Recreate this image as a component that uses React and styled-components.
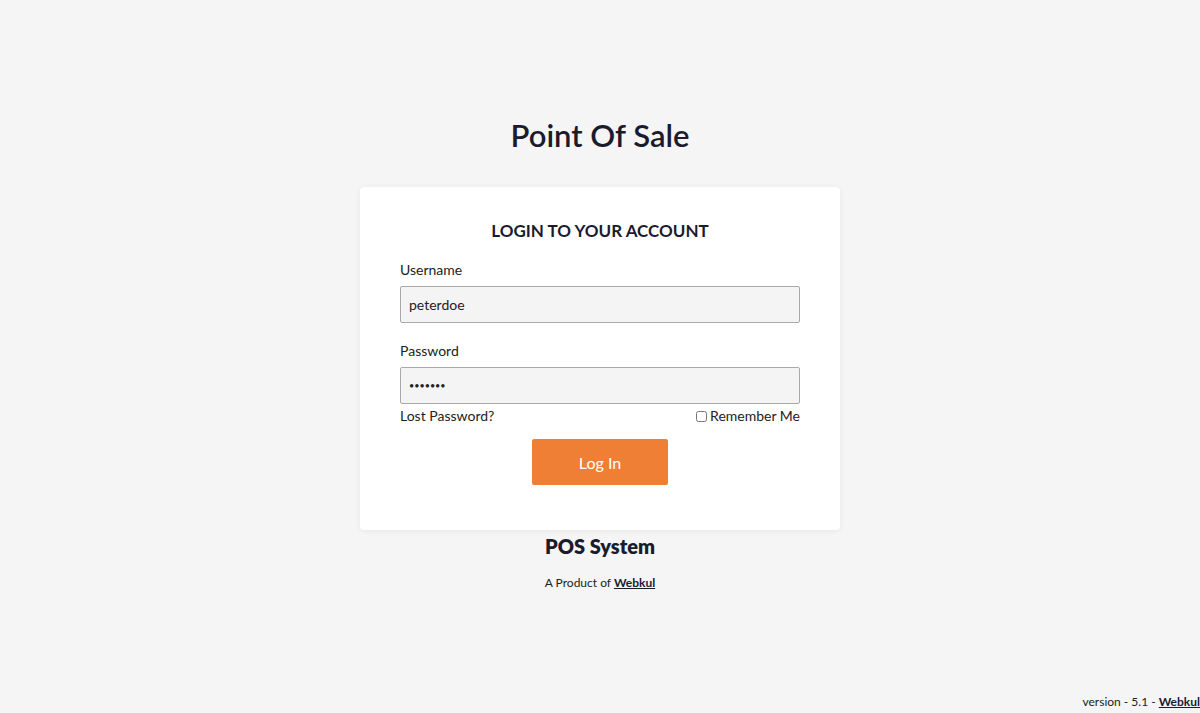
import styled, { createGlobalStyle } from "styled-components";

const GlobalStyle = createGlobalStyle`
  html, body {
    margin: 0;
    padding: 0;
    background: #f5f5f5;
    font-family: "Lato", "Noto Sans", sans-serif;
    color: #1c1c2b;
  }
  * { box-sizing: border-box; }
`

const Page = styled.div`
  min-height: 713px;
  display: flex;
  flex-direction: column;
  align-items: center;
  padding-top: 112px;
`

const Title = styled.h1`
  margin: 0 0 29px;
  font-size: 31px;
  line-height: 46px;
  font-weight: 600;
  color: #1b1b2e;
`

const Card = styled.form`
  width: 480px;
  background: #fff;
  border-radius: 4px;
  box-shadow: 0 1px 6px rgba(0, 0, 0, 0.06);
  padding: 32px 40px 45px;
  display: flex;
  flex-direction: column;
`

const Heading = styled.h2`
  margin: 0 0 17px;
  text-align: center;
  font-size: 17px;
  line-height: 24px;
  font-weight: 700;
  color: #1b1b2e;
`

const Label = styled.label`
  display: block;
  font-size: 14px;
  line-height: 20px;
  margin-top: ${p => p.$gap || 0}px;
  color: #222;
`

const Input = styled.input`
  display: block;
  width: 100%;
  height: 37px;
  margin-top: 6px;
  padding: 0 8px;
  background: #f4f4f4;
  border: 1px solid #a9a9a9;
  border-radius: 2px;
  font-family: inherit;
  font-size: ${p => (p.type === "password" ? 9 : 14)}px;
  color: #222;
  outline: none;
`

const Row = styled.div`
  display: flex;
  justify-content: space-between;
  align-items: center;
  margin-top: 2px;
  font-size: 14px;
  line-height: 20px;
  color: #222;
`

const Remember = styled.label`
  display: flex;
  align-items: center;
  gap: 3px;

  input {
    margin: 0;
    width: 11px;
    height: 11px;
  }
`

const Button = styled.button`
  align-self: center;
  margin-top: 13px;
  width: 136px;
  height: 46px;
  border: none;
  border-radius: 2px;
  background: #ee7f35;
  color: #fff;
  font-family: inherit;
  font-size: 16px;
  cursor: pointer;
`

const Brand = styled.div`
  margin-top: 4px;
  font-size: 20px;
  line-height: 24px;
  font-weight: 800;
  color: #1b1b2e;
`

const Product = styled.div`
  margin-top: 16px;
  font-size: 12px;
  line-height: 18px;
  color: #222;
`

const Link = styled.a`
  color: #1b1b2e;
  font-weight: 700;
  text-decoration: underline;
`

const Version = styled.div`
  margin-top: auto;
  align-self: flex-end;
  padding-bottom: 2px;
  font-size: 12px;
  line-height: 18px;
  color: #222;
  white-space: nowrap;
`

export default function App() {
  return (
    <>
      <GlobalStyle />
      <Page>
        <Title>Point Of Sale</Title>
        <Card onSubmit={e => e.preventDefault()}>
          <Heading>LOGIN TO YOUR ACCOUNT</Heading>
          <Label>Username</Label>
          <Input type="text" defaultValue="peterdoe" />
          <Label $gap={18}>Password</Label>
          <Input type="password" defaultValue="1234567" />
          <Row>
            <span>Lost Password?</span>
            <Remember><input type="checkbox" />Remember Me</Remember>
          </Row>
          <Button type="submit">Log In</Button>
        </Card>
        <Brand>POS System</Brand>
        <Product>A Product of <Link href="#">Webkul</Link></Product>
        <Version>version - 5.1 - <Link href="#">Webkul</Link></Version>
      </Page>
    </>
  )
}
